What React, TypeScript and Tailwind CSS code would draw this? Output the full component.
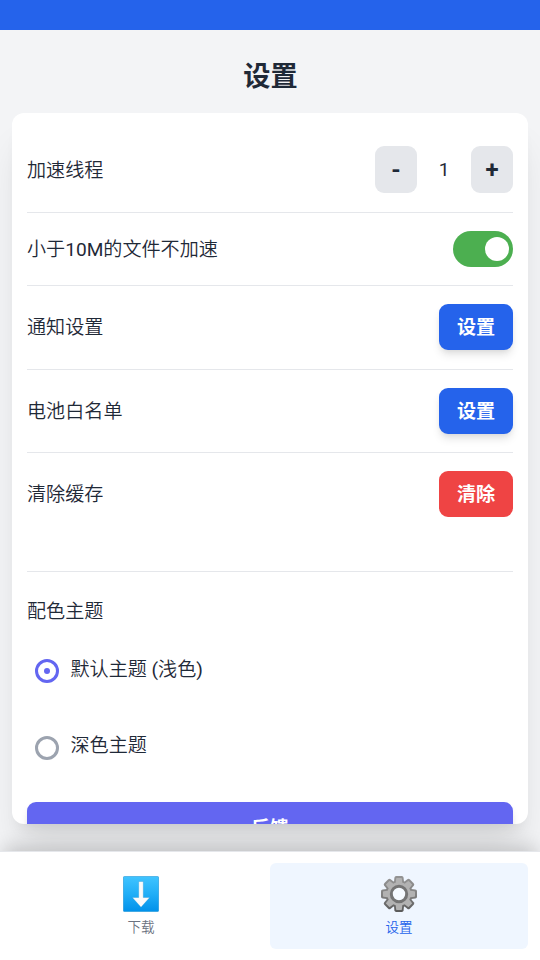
import { useState } from "react"
import type { ReactNode } from "react"

type RowProps = {
  label: ReactNode
  className: string
  children: ReactNode
}

const SettingRow = ({ label, className, children }: RowProps) => (
  <div className={`flex shrink-0 items-start justify-between border-b border-gray-200 pt-[18px] ${className}`}>
    <div className="flex w-full items-center justify-between">
      <span className="pt-[2px]">{label}</span>
      {children}
    </div>
  </div>
)

const StepButton = ({ content, onClick }: { content: string; onClick: () => void }) => (
  <button
    onClick={onClick}
    className="h-[47px] w-[42px] rounded-[9px] bg-gray-200 pt-px text-[24px] leading-[47px] font-bold text-[#1f2937]"
  >
    {content}
  </button>
)

const ActionButton = ({ content, style }: { content: string; style: string }) => (
  <button className={`h-[46px] w-[74px] rounded-[9px] pt-[2px] font-bold text-white ${style}`}>{content}</button>
)

const ThemeOption = ({ label, checked, onClick }: { label: ReactNode; checked: boolean; onClick: () => void }) => (
  <button onClick={onClick} className="flex h-[76px] items-start pl-2 text-left">
    <span
      className={`flex size-6 items-center justify-center rounded-full border-[3px] ${
        checked ? "mt-[3px] border-[#6366f1]" : "mt-1 border-[#9ca3af]"
      }`}
    >
      {checked && <span className="size-1.5 rounded-full bg-[#6366f1]" />}
    </span>
    <span className="ml-[11.5px] leading-[27px]">{label}</span>
  </button>
)

const DownloadIcon = () => (
  <svg width="36" height="36" viewBox="0 0 36 36">
    <defs>
      <linearGradient id="tile" x1="0" y1="0" x2="0" y2="1">
        <stop offset="0" stopColor="#40c4ff" />
        <stop offset="0.5" stopColor="#20aef7" />
        <stop offset="1" stopColor="#0091ea" />
      </linearGradient>
    </defs>
    <rect x="0.4" y="0.4" width="35.2" height="35.2" rx="1.2" fill="url(#tile)" stroke="#0288d1" strokeOpacity="0.65" strokeWidth="0.8" />
    <path
      d="M15.7 5.5h4.6v16h6.4L18 31.2 9.3 21.5h6.4z"
      fill="#fafafa"
      stroke="#0288d1"
      strokeOpacity="0.35"
      strokeWidth="0.8"
      strokeLinejoin="round"
    />
  </svg>
)

const angles = [0, 45, 90, 135, 180, 225, 270, 315]

const GearIcon = () => (
  <svg width="36" height="36" viewBox="0 0 36 36">
    <defs>
      <linearGradient id="rim" gradientUnits="userSpaceOnUse" x1="0" y1="0" x2="0" y2="36">
        <stop offset="0" stopColor="#949494" />
        <stop offset="0.5" stopColor="#828282" />
        <stop offset="1" stopColor="#5a5a5a" />
      </linearGradient>
      <mask id="outer">
        <circle cx="18" cy="18" r="13.6" fill="#fff" />
        {angles.map((a) => (
          <path key={a} transform={`rotate(${a} 18 18)`} d="M12.8 8 13.4 1.7Q13.6 0 15.2 0h5.6q1.6 0 1.8 1.7L23.2 8z" fill="#fff" />
        ))}
      </mask>
    </defs>
    <rect width="36" height="36" fill="url(#rim)" mask="url(#outer)" />
    <g fill="#b2b2b2">
      <circle cx="18" cy="18" r="11.7" />
      {angles.map((a) => (
        <path key={a} transform={`rotate(${a} 18 18)`} d="M14.5 8.5 15.2 2.6q.1-.6.7-.6h4.2q.6 0 .7.6l.7 5.9z" />
      ))}
    </g>
    <circle cx="18" cy="18" r="7.7" fill="#f5faff" stroke="#747474" strokeWidth="3" />
  </svg>
)

const NavItem = ({ label, active, children }: { label: string; active?: boolean; children: ReactNode }) => (
  <button
    className={`flex h-[86px] w-[258px] flex-col items-center rounded-md pt-[13px] text-[13.5px] leading-[18px] ${
      active ? "bg-[#eff6ff] text-[#2563eb]" : "text-[#6b7280]"
    }`}
  >
    {children}
    <span className="mt-1.5">{label}</span>
  </button>
)

export default function App() {
  const [threads, setThreads] = useState(1)
  const [skipSmall, setSkipSmall] = useState(true)
  const [theme, setTheme] = useState("light")

  return (
    <div className="flex h-[960px] w-[540px] flex-col overflow-hidden bg-[#f3f4f6] font-[Roboto,'Noto_Sans_CJK_SC',sans-serif] text-[19.1px] leading-[28px] font-[350] text-[#1f2937]">
      <div className="h-[30px] shrink-0 bg-[#2563eb]" />

      <main className="flex min-h-0 flex-1 flex-col px-3 pb-[27px]">
        <h1 className="flex h-[83px] shrink-0 items-center justify-center pt-[11px] pl-px text-[27.2px] font-bold">设置</h1>

        <section className="flex min-h-0 flex-1 flex-col overflow-hidden rounded-xl bg-white px-[15px] pt-[15px] shadow-[0_30px_37.5px_-7.5px_rgb(0_0_0/0.1),0_12px_15px_-9px_rgb(0_0_0/0.1)]">
          <SettingRow label="加速线程" className="h-[85px]">
            <div className="flex items-center">
              <StepButton content="-" onClick={() => setThreads(Math.max(1, threads - 1))} />
              <span className="w-[54px] text-center font-normal">{threads}</span>
              <StepButton content="+" onClick={() => setThreads(threads + 1)} />
            </div>
          </SettingRow>

          <SettingRow
            label={<>小于<span className="font-normal">10M</span>的文件不加速</>}
            className="h-[73px]"
          >
            <button
              onClick={() => setSkipSmall(!skipSmall)}
              className={`flex h-9 w-[60px] items-center rounded-full px-1 ${
                skipSmall ? "justify-end bg-[#4caf50]" : "justify-start bg-gray-300"
              }`}
            >
              <span className="size-6 rounded-full bg-white" />
            </button>
          </SettingRow>

          <SettingRow label="通知设置" className="h-[84px]">
            <ActionButton content="设置" style="bg-[#2563eb] shadow-[0_6px_9px_-1.5px_rgb(0_0_0/0.1),0_3px_6px_-3px_rgb(0_0_0/0.1)]" />
          </SettingRow>

          <SettingRow label="电池白名单" className="h-[83px]">
            <ActionButton content="设置" style="bg-[#2563eb] shadow-[0_6px_9px_-1.5px_rgb(0_0_0/0.1),0_3px_6px_-3px_rgb(0_0_0/0.1)]" />
          </SettingRow>

          <SettingRow label="清除缓存" className="h-[119px]">
            <ActionButton content="清除" style="bg-[#ef4444]" />
          </SettingRow>

          <div className="flex h-[230px] shrink-0 flex-col pt-[26px]">
            <span>配色主题</span>
            <div className="mt-[30px] flex flex-col">
              <ThemeOption
                label={<>默认主题 <span className="font-normal">(</span>浅色<span className="font-normal">)</span></>}
                checked={theme === "light"}
                onClick={() => setTheme("light")}
              />
              <ThemeOption label="深色主题" checked={theme === "dark"} onClick={() => setTheme("dark")} />
            </div>
          </div>

          <button className="h-[48px] shrink-0 rounded-[9px] bg-[#6366f1] pt-[6px] font-bold text-white shadow-[0_6px_9px_-1.5px_rgb(0_0_0/0.1),0_3px_6px_-3px_rgb(0_0_0/0.1)]">
            反馈
          </button>
        </section>
      </main>

      <nav className="relative flex h-[109px] shrink-0 justify-center border-t border-gray-200 bg-white pt-[11px] shadow-[0_-6px_18px_-3px_rgb(0_0_0/0.2)]">
        <NavItem label="下载">
          <DownloadIcon />
        </NavItem>
        <NavItem label="设置" active>
          <GearIcon />
        </NavItem>
      </nav>
    </div>
  )
}
